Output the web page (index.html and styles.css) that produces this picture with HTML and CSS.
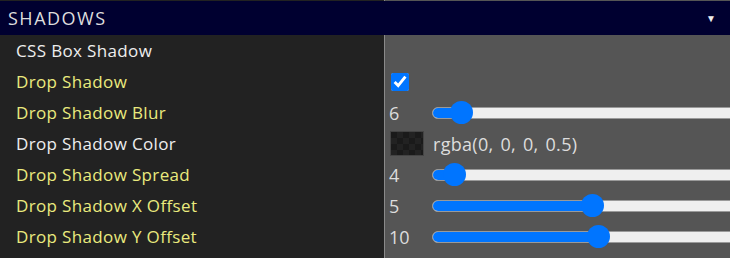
FILE: index.html
```html
<!DOCTYPE html>
<html lang="en">

<head>
    <meta charset="UTF-8">
    <meta name="viewport" content="width=device-width, initial-scale=1.0">
    <title>Shadows</title>
    <link rel="stylesheet" href="styles.css">
</head>

<body>
    <div class="panel">
        <div class="row edge">
            <div class="label"></div>
            <div class="control"></div>
        </div>

        <div class="header">
            <span class="title">SHADOWS</span>
            <span class="caret">&#9660;</span>
        </div>

        <div class="row">
            <div class="label">CSS Box Shadow</div>
            <div class="control"></div>
        </div>
        <div class="row">
            <div class="label changed">Drop Shadow</div>
            <div class="control">
                <input type="checkbox" class="check" checked>
            </div>
        </div>
        <div class="row">
            <div class="label changed">Drop Shadow Blur</div>
            <div class="control">
                <span class="num">6</span>
                <div class="slider"><div class="fill" style="width: 28px"></div><div class="thumb" style="left: 28px"></div></div>
            </div>
        </div>
        <div class="row">
            <div class="label">Drop Shadow Color</div>
            <div class="control">
                <span class="swatch"></span>
                <span class="color-text">rgba(0, 0, 0, 0.5)</span>
            </div>
        </div>
        <div class="row">
            <div class="label changed">Drop Shadow Spread</div>
            <div class="control">
                <span class="num">4</span>
                <div class="slider"><div class="fill" style="width: 21px"></div><div class="thumb" style="left: 21px"></div></div>
            </div>
        </div>
        <div class="row">
            <div class="label changed">Drop Shadow X Offset</div>
            <div class="control">
                <span class="num">5</span>
                <div class="slider"><div class="fill" style="width: 159px"></div><div class="thumb" style="left: 159px"></div></div>
            </div>
        </div>
        <div class="row">
            <div class="label changed">Drop Shadow Y Offset</div>
            <div class="control">
                <span class="num">10</span>
                <div class="slider"><div class="fill" style="width: 165px"></div><div class="thumb" style="left: 165px"></div></div>
            </div>
        </div>
        <div class="row">
            <div class="label"></div>
            <div class="control"></div>
        </div>
    </div>
</body>

</html>
```

FILE: styles.css
```css
* {
    margin: 0;
    padding: 0;
    box-sizing: border-box;
}

body {
    background-color: #555555;
    font-family: "Open Sans", "Noto Sans", sans-serif;
    overflow: hidden;
}

.panel {
    width: 730px;
    height: 258px;
    overflow: hidden;
}

.row {
    display: grid;
    grid-template-columns: 385px 1fr;
    height: 31px;
}

.row.edge {
    height: 1px;
}

.label {
    background-color: #222222;
    border-right: 1px solid #8a8a8a;
    color: #eeeeee;
    font-size: 17px;
    letter-spacing: 0.35px;
    padding-left: 16px;
    display: flex;
    align-items: center;
}

.label.changed {
    color: #eaea7e;
}

.control {
    background-color: #555555;
    display: flex;
    align-items: center;
    padding-left: 4px;
    min-width: 0;
}

.header {
    height: 34px;
    background-color: #000030;
    color: #dddddd;
    display: flex;
    align-items: center;
    justify-content: space-between;
    padding: 0 14px 0 8px;
}

.title {
    font-size: 18px;
    letter-spacing: 1.5px;
}

.caret {
    font-size: 10px;
    color: #eeeeee;
}

.check {
    width: 18px;
    height: 18px;
    margin-left: 2px;
    accent-color: #0075ff;
}

.num {
    width: 43px;
    color: #dddddd;
    font-size: 18px;
    flex-shrink: 0;
}

.slider {
    position: relative;
    width: 340px;
    height: 12px;
    flex-shrink: 0;
    background-color: #efefef;
    border: 1px solid #9a9a9a;
    border-radius: 6px;
}

.fill {
    height: 100%;
    background-color: #0075ff;
    border-radius: 6px 0 0 6px;
}

.thumb {
    position: absolute;
    top: 50%;
    width: 23px;
    height: 23px;
    margin: -11.5px 0 0 -11.5px;
    border-radius: 50%;
    background-color: #0075ff;
}

.swatch {
    width: 34px;
    height: 25px;
    margin-left: 1px;
    border: 1px solid #444444;
    background-color: #1a1a1a;
    background-image:
        linear-gradient(45deg, #222 25%, transparent 25%, transparent 75%, #222 75%),
        linear-gradient(45deg, #222 25%, transparent 25%, transparent 75%, #222 75%);
    background-size: 12px 12px;
    background-position: 0 0, 6px 6px;
}

.color-text {
    color: #dddddd;
    font-size: 18px;
    letter-spacing: 0.3px;
    word-spacing: 2px;
    margin-left: 9px;
}
```
